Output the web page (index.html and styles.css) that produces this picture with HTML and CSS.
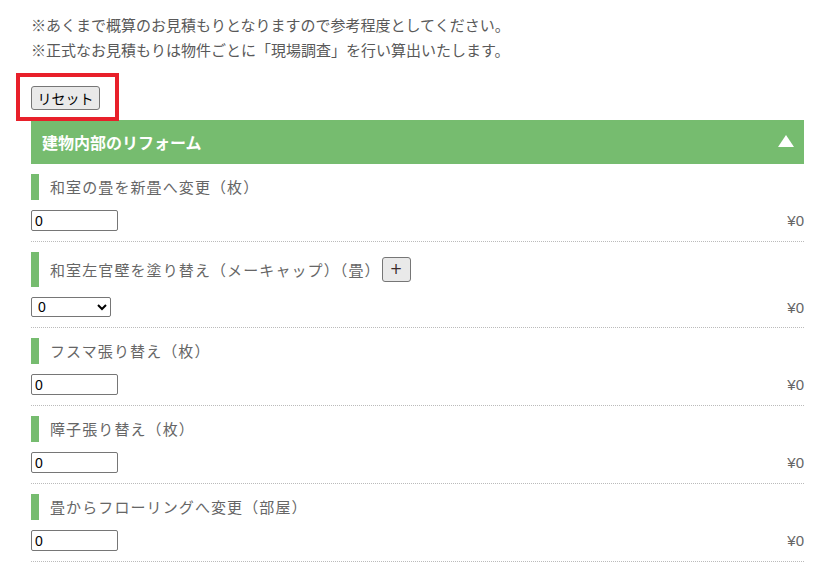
FILE: index.html
```html
<!DOCTYPE html>
<html lang="ja">
<head>
<meta charset="utf-8">
<link rel="stylesheet" href="styles.css">
</head>
<body>
<div class="page">
  <div class="notes">
    <p>※あくまで概算のお見積もりとなりますので参考程度としてください。</p>
    <p>※正式なお見積もりは物件ごとに「現場調査」を行い算出いたします。</p>
  </div>
  <div class="reset-wrap">
    <button class="reset" type="button">リセット</button>
  </div>
  <div class="section">
    <div class="section-head">
      <span class="section-title">建物内部のリフォーム</span>
      <span class="tri"></span>
    </div>
    <div class="item">
      <div class="label">和室の畳を新畳へ変更（枚）</div>
      <div class="row"><input class="num" type="text" value="0"><span class="price">¥0</span></div>
    </div>
    <div class="item">
      <div class="label label-tall">和室左官壁を塗り替え（メーキャップ）（畳）<button class="plus" type="button">+</button></div>
      <div class="row"><select class="sel"><option>0</option></select><span class="price">¥0</span></div>
    </div>
    <div class="item">
      <div class="label">フスマ張り替え（枚）</div>
      <div class="row"><input class="num" type="text" value="0"><span class="price">¥0</span></div>
    </div>
    <div class="item">
      <div class="label">障子張り替え（枚）</div>
      <div class="row"><input class="num" type="text" value="0"><span class="price">¥0</span></div>
    </div>
    <div class="item">
      <div class="label">畳からフローリングへ変更（部屋）</div>
      <div class="row"><input class="num" type="text" value="0"><span class="price">¥0</span></div>
    </div>
  </div>
</div>
</body>
</html>
```
FILE: styles.css
```css
* { box-sizing: border-box; }
html, body { margin: 0; padding: 0; background: #fff; }
body {
  font-family: "Noto Sans CJK JP", "Noto Sans", sans-serif;
  color: #595959;
}
.page {
  padding: 12px 28px 0 31px;
}
.notes p {
  margin: 0;
  font-size: 15px;
  line-height: 25px;
}
.reset-wrap {
  display: inline-block;
  margin: 11px 0 0 -15px;
  padding: 9px 15px 7px 11px;
  border: 4px solid #e8202a;
}
.reset {
  display: block;
  width: 69px;
  height: 24px;
  padding: 0;
  font-family: "Noto Sans CJK JP", sans-serif;
  font-size: 14px;
  color: #000;
  background: #e9e9e9;
  border: 1px solid #767676;
  border-radius: 3px;
}
.section { margin-top: -1px; }
.section-head {
  height: 44px;
  background: #76bc6f;
  display: flex;
  align-items: center;
  justify-content: space-between;
  padding: 0 10px 0 11px;
}
.section-title {
  color: #fff;
  font-weight: bold;
  font-size: 16px;
}
.tri {
  width: 0;
  height: 0;
  border-left: 8.5px solid transparent;
  border-right: 8.5px solid transparent;
  border-bottom: 12px solid #fff;
  margin-top: -2px;
}
.item {
  padding: 10px 0;
  border-bottom: 1px dotted #bbb;
}
.label {
  border-left: 8px solid #76bc6f;
  padding-left: 11px;
  height: 26px;
  line-height: 26px;
  font-size: 15px;
  color: #666;
  letter-spacing: 1.1px;
  display: flex;
  align-items: center;
}
.label-tall { height: 35px; }
.plus {
  margin-left: 1px;
  width: 29px;
  height: 25px;
  padding: 0;
  background: #e9e9e9;
  border: 1px solid #767676;
  border-radius: 3px;
  font-family: "DejaVu Sans", sans-serif;
  font-size: 15px;
  line-height: 21px;
  color: #3a2a2a;
  letter-spacing: 0;
}
.row {
  margin-top: 10px;
  display: flex;
  justify-content: space-between;
  align-items: center;
}
.num {
  width: 87px;
  height: 21px;
  padding: 1px 3px;
  border: 1px solid #767676;
  border-radius: 2px;
  font-family: "Liberation Sans", Arial, sans-serif;
  font-size: 14px;
  color: #000;
}
.sel {
  width: 80px;
  height: 20px;
  padding: 0 0 0 2px;
  border: 1px solid #767676;
  border-radius: 2px;
  font-family: "Liberation Sans", Arial, sans-serif;
  font-size: 14px;
  color: #000;
  background: #fff;
}
.price {
  font-family: "Liberation Sans", Arial, sans-serif;
  font-size: 15px;
  color: #666;
}
```
